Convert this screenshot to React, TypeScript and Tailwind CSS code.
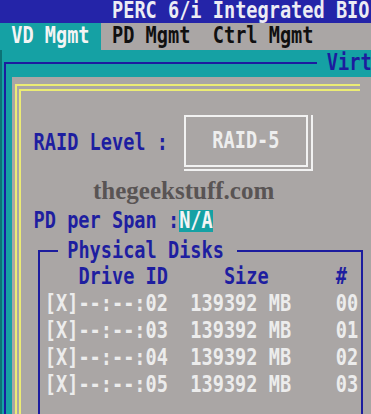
import React from "react";

function T({ children, className = "" }: { children: React.ReactNode; className?: string }) {
  return <span className={"inline-block whitespace-pre scale-y-[1.25] " + className}>{children}</span>;
}

export default function App() {
  const rows = [
    ["02", "00"],
    ["03", "01"],
    ["04", "02"],
    ["05", "03"],
  ];
  return (
    <div className="w-[371px] h-[414px] overflow-hidden flex flex-col bg-[#15a1a4] font-['DejaVu_Sans_Mono',monospace] text-[18.6px] font-bold leading-none">
      {/* title bar */}
      <div className="h-[23px] shrink-0 bg-[#2424a8] flex items-center pl-[112px] text-[#ececf4]">
        <T>PERC 6/i Integrated BIO</T>
      </div>
      {/* tabs */}
      <div className="h-[27px] shrink-0 bg-[#aaa6a5] flex">
        <div className="w-[100.8px] bg-[#15a1a4] flex items-center text-[#f4f4f4]">
          <T> VD Mgmt </T>
        </div>
        <div className="flex items-center text-[#101010]">
          <T> PD Mgmt  Ctrl Mgmt</T>
        </div>
      </div>
      {/* teal area */}
      <div className="flex-1 flex flex-col border-l-2 border-[#0c7276] pt-[12px] pl-[2px]">
        <div className="relative flex-1 flex flex-col border-l-2 border-t-2 border-[#1c1c9e] pt-[13px] pl-[6px]">
          <div className="absolute left-[311px] top-[-13px] h-[24px] pl-[9.8px] bg-[#15a1a4] flex items-center text-[#1c1c9e]">
            <T>Virt</T>
          </div>
          {/* gray panel */}
          <div className="flex-1 flex flex-col bg-[#aaa6a5] pl-[3px] pt-[7px]">
            <div className="flex-1 flex flex-col border-l-2 border-t-2 border-[#ecec74] mr-[11px] pl-[2px] pt-[3px]">
              <div className="flex-1 flex flex-col border-l-2 border-t-2 border-[#ecec74]">
                {/* RAID row */}
                <div className="mt-[24px] h-[56px] flex items-center">
                  <div className="pl-[12.6px] text-[#1e1ea0]">
                    <T>RAID Level :</T>
                  </div>
                  <div className="ml-[16px] border-r-2 border-b-2 border-[#f2f2f2] pr-[3px] pb-[2px]">
                    <div className="w-[124px] h-[52px] border-2 border-[#f2f2f2] flex items-center justify-center text-[#eeeeee]">
                      <T>RAID-5</T>
                    </div>
                  </div>
                </div>
                {/* watermark */}
                <div className="h-[39px] flex items-center pl-[72px] font-['Liberation_Serif',serif] text-[25px] font-bold text-[#595454]">
                  thegeekstuff.com
                </div>
                {/* PD per span */}
                <div className="h-[22px] flex items-stretch">
                  <div className="pl-[12.6px] flex items-center text-[#1e1ea0]">
                    <T>PD per Span :</T>
                  </div>
                  <div className="bg-[#15a1a4] flex items-center text-[#f4f4f4]">
                    <T>N/A</T>
                  </div>
                </div>
                {/* Physical disks box */}
                <div className="relative mt-[18px] ml-[17px] mr-[-3px] border-2 border-[#1c1c9e] pt-[12px] pb-[30px] pl-[4.8px]">
                  <div className="absolute left-[18px] top-[-12px] h-[22px] bg-[#aaa6a5] pl-[9.2px] pr-[13px] flex items-center text-[#1e1ea0]">
                    <T>Physical Disks</T>
                  </div>
                  <div className="h-[27px] flex items-center text-[#1e1ea0]">
                    <T>{"   Drive ID     Size      #"}</T>
                  </div>
                  {rows.map(([id, n]) => (
                    <div key={id} className="h-[27px] flex items-center text-[#ececec]">
                      <T>{`[X]--:--:${id}  139392 MB    ${n}`}</T>
                    </div>
                  ))}
                </div>
              </div>
            </div>
          </div>
        </div>
      </div>
    </div>
  );
}
